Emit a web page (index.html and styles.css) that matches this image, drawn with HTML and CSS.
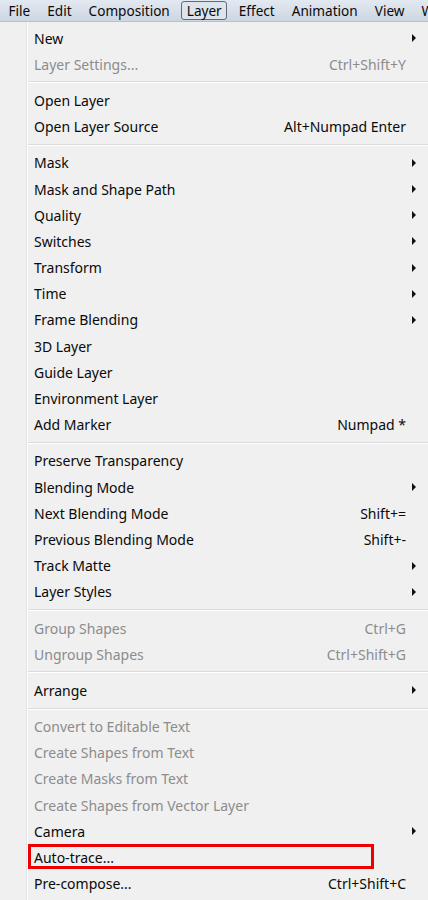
FILE: index.html
```html
<!DOCTYPE html>
<html>
<head>
<meta charset="utf-8">
<link rel="stylesheet" href="styles.css">
</head>
<body>
<div class="menubar">
  <span class="mb-item">File</span>
  <span class="mb-item">Edit</span>
  <span class="mb-item">Composition</span>
  <span class="mb-item active">Layer</span>
  <span class="mb-item">Effect</span>
  <span class="mb-item">Animation</span>
  <span class="mb-item">View</span>
  <span class="mb-item">W</span>
</div>
<div class="menu">
  <div class="row"><span class="label">New</span><span class="arrow"></span></div>
  <div class="row dis"><span class="label">Layer Settings...</span><span class="key">Ctrl+Shift+Y</span></div>
  <div class="sep"></div>
  <div class="row"><span class="label">Open Layer</span></div>
  <div class="row"><span class="label">Open Layer Source</span><span class="key">Alt+Numpad Enter</span></div>
  <div class="sep"></div>
  <div class="row"><span class="label">Mask</span><span class="arrow"></span></div>
  <div class="row"><span class="label">Mask and Shape Path</span><span class="arrow"></span></div>
  <div class="row"><span class="label">Quality</span><span class="arrow"></span></div>
  <div class="row"><span class="label">Switches</span><span class="arrow"></span></div>
  <div class="row"><span class="label">Transform</span><span class="arrow"></span></div>
  <div class="row"><span class="label">Time</span><span class="arrow"></span></div>
  <div class="row"><span class="label">Frame Blending</span><span class="arrow"></span></div>
  <div class="row"><span class="label">3D Layer</span></div>
  <div class="row"><span class="label">Guide Layer</span></div>
  <div class="row"><span class="label">Environment Layer</span></div>
  <div class="row"><span class="label">Add Marker</span><span class="key">Numpad *</span></div>
  <div class="sep"></div>
  <div class="row"><span class="label">Preserve Transparency</span></div>
  <div class="row"><span class="label">Blending Mode</span><span class="arrow"></span></div>
  <div class="row"><span class="label">Next Blending Mode</span><span class="key">Shift+=</span></div>
  <div class="row"><span class="label">Previous Blending Mode</span><span class="key">Shift+-</span></div>
  <div class="row"><span class="label">Track Matte</span><span class="arrow"></span></div>
  <div class="row"><span class="label">Layer Styles</span><span class="arrow"></span></div>
  <div class="sep"></div>
  <div class="row dis"><span class="label">Group Shapes</span><span class="key">Ctrl+G</span></div>
  <div class="row dis"><span class="label">Ungroup Shapes</span><span class="key">Ctrl+Shift+G</span></div>
  <div class="sep"></div>
  <div class="row"><span class="label">Arrange</span><span class="arrow"></span></div>
  <div class="sep"></div>
  <div class="row dis"><span class="label">Convert to Editable Text</span></div>
  <div class="row dis"><span class="label">Create Shapes from Text</span></div>
  <div class="row dis"><span class="label">Create Masks from Text</span></div>
  <div class="row dis"><span class="label">Create Shapes from Vector Layer</span></div>
  <div class="row"><span class="label">Camera</span><span class="arrow"></span></div>
  <div class="row"><span class="label">Auto-trace...</span><span class="highlight"></span></div>
  <div class="row"><span class="label">Pre-compose...</span><span class="key">Ctrl+Shift+C</span></div>
</div>
</body>
</html>
```
FILE: styles.css
```css
html, body {
  margin: 0;
  padding: 0;
  background: #f0f0f0;
  overflow: hidden;
}
body {
  width: 428px;
  height: 900px;
  font-family: "Noto Sans", "Open Sans", sans-serif;
  font-size: 14px;
  color: #0a0a0a;
}
.menubar {
  height: 22px;
  display: flex;
  align-items: center;
  background: linear-gradient(#e3e9f1, #cdd6e1);
  border-bottom: 1px solid #b9c0ca;
  box-sizing: border-box;
  white-space: nowrap;
  overflow: hidden;
  font-size: 13.6px;
}
.mb-item {
  flex: none;
  padding: 0 8.5px;
  height: 19px;
  line-height: 19px;
  box-sizing: border-box;
}
.mb-item.active {
  border: 1px solid #5f6b7a;
  border-radius: 3px;
  background: #dde4ec;
  padding: 0 4.5px;
  margin: 0 3px;
  line-height: 17px;
}
.menu {
  padding-top: 3px;
  background: linear-gradient(to right, #f0f0f0 26px, #e2e2e2 26px, #e2e2e2 27px, #ffffff 27px, #ffffff 28px, #f0f0f0 28px);
  height: 878px;
}
.row {
  position: relative;
  display: flex;
  align-items: center;
  height: 26.2px;
  padding-left: 34px;
  padding-right: 22px;
}
.row.dis { color: #8c8c8c; }
.label { flex: 1; white-space: nowrap; }
.key { white-space: nowrap; }
.arrow {
  position: absolute;
  right: 12px;
  top: 9px;
  width: 0;
  height: 0;
  border-top: 4px solid transparent;
  border-bottom: 4px solid transparent;
  border-left: 4px solid #111;
}
.sep {
  height: 10px;
  margin-left: 28px;
  display: flex;
  flex-direction: column;
  justify-content: center;
}
.sep::before {
  content: "";
  display: block;
  height: 1px;
  background: #dadada;
}
.sep::after {
  content: "";
  display: block;
  height: 1px;
  background: #ffffff;
}
.highlight {
  position: absolute;
  left: 28px;
  top: 0;
  width: 346px;
  height: 25px;
  border: 3px solid #ee0000;
  box-sizing: border-box;
}
```
